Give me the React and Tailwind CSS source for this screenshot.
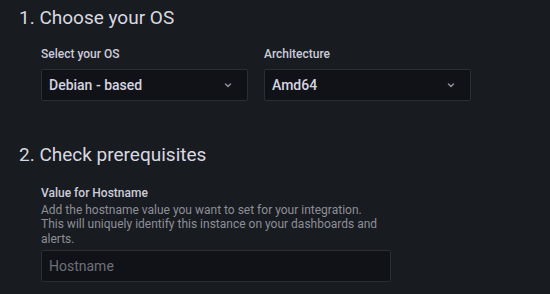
import { useState } from 'react';

function Chevron() {
  return (
    <svg width="16" height="16" viewBox="0 0 16 16" fill="none" className="shrink-0">
      <path d="M5.5 7l2.5 2.5L10.5 7" stroke="#8e8e99" strokeWidth="1.5" strokeLinecap="round" strokeLinejoin="round" />
    </svg>
  );
}

function SelectBox({ label, value }) {
  return (
    <div className="w-[207px]">
      <div className="text-[12px] leading-[15px] font-medium text-[#ccccdc] mb-[7px]">{label}</div>
      <div className="h-[32px] flex items-center justify-between pl-[7px] pr-[11px] bg-[#111217] border border-[#2c2e33] rounded-[2px]">
        <span className="text-[14px] font-medium text-[#d4d4e0]">{value}</span>
        <Chevron />
      </div>
    </div>
  );
}

export default function App() {
  const [hostname, setHostname] = useState('');

  return (
    <div className="w-[550px] h-[294px] overflow-hidden bg-[#181b1f] font-['Roboto',sans-serif] pl-[19px] pt-[6px]">
      <h2 className="text-[19px] leading-[24px] font-normal text-[#d8d9e0]">1. Choose your OS</h2>
      <div className="ml-[22px] mt-[17px] flex gap-[16px]">
        <SelectBox label="Select your OS" value="Debian - based" />
        <SelectBox label="Architecture" value="Amd64" />
      </div>

      <h2 className="mt-[42px] text-[19px] leading-[24px] font-normal text-[#d8d9e0]">2. Check prerequisites</h2>
      <div className="ml-[22px] mt-[19px] w-[350px]">
        <div className="text-[12px] leading-[15px] font-medium text-[#ccccdc]">Value for Hostname</div>
        <p className="mt-[2px] w-[346px] text-[12px] leading-[14.4px] text-[#8e8e99]">
          Add the hostname value you want to set for your integration. This will uniquely identify this instance on your dashboards and alerts.
        </p>
        <input
          value={hostname}
          onChange={(e) => setHostname(e.target.value)}
          placeholder="Hostname"
          className="mt-[4px] w-full h-[32px] px-[7px] bg-[#111217] border border-[#2c2e33] rounded-[2px] text-[14px] text-[#ccccdc] placeholder:text-[#6e7077] outline-none"
        />
      </div>
    </div>
  );
}
